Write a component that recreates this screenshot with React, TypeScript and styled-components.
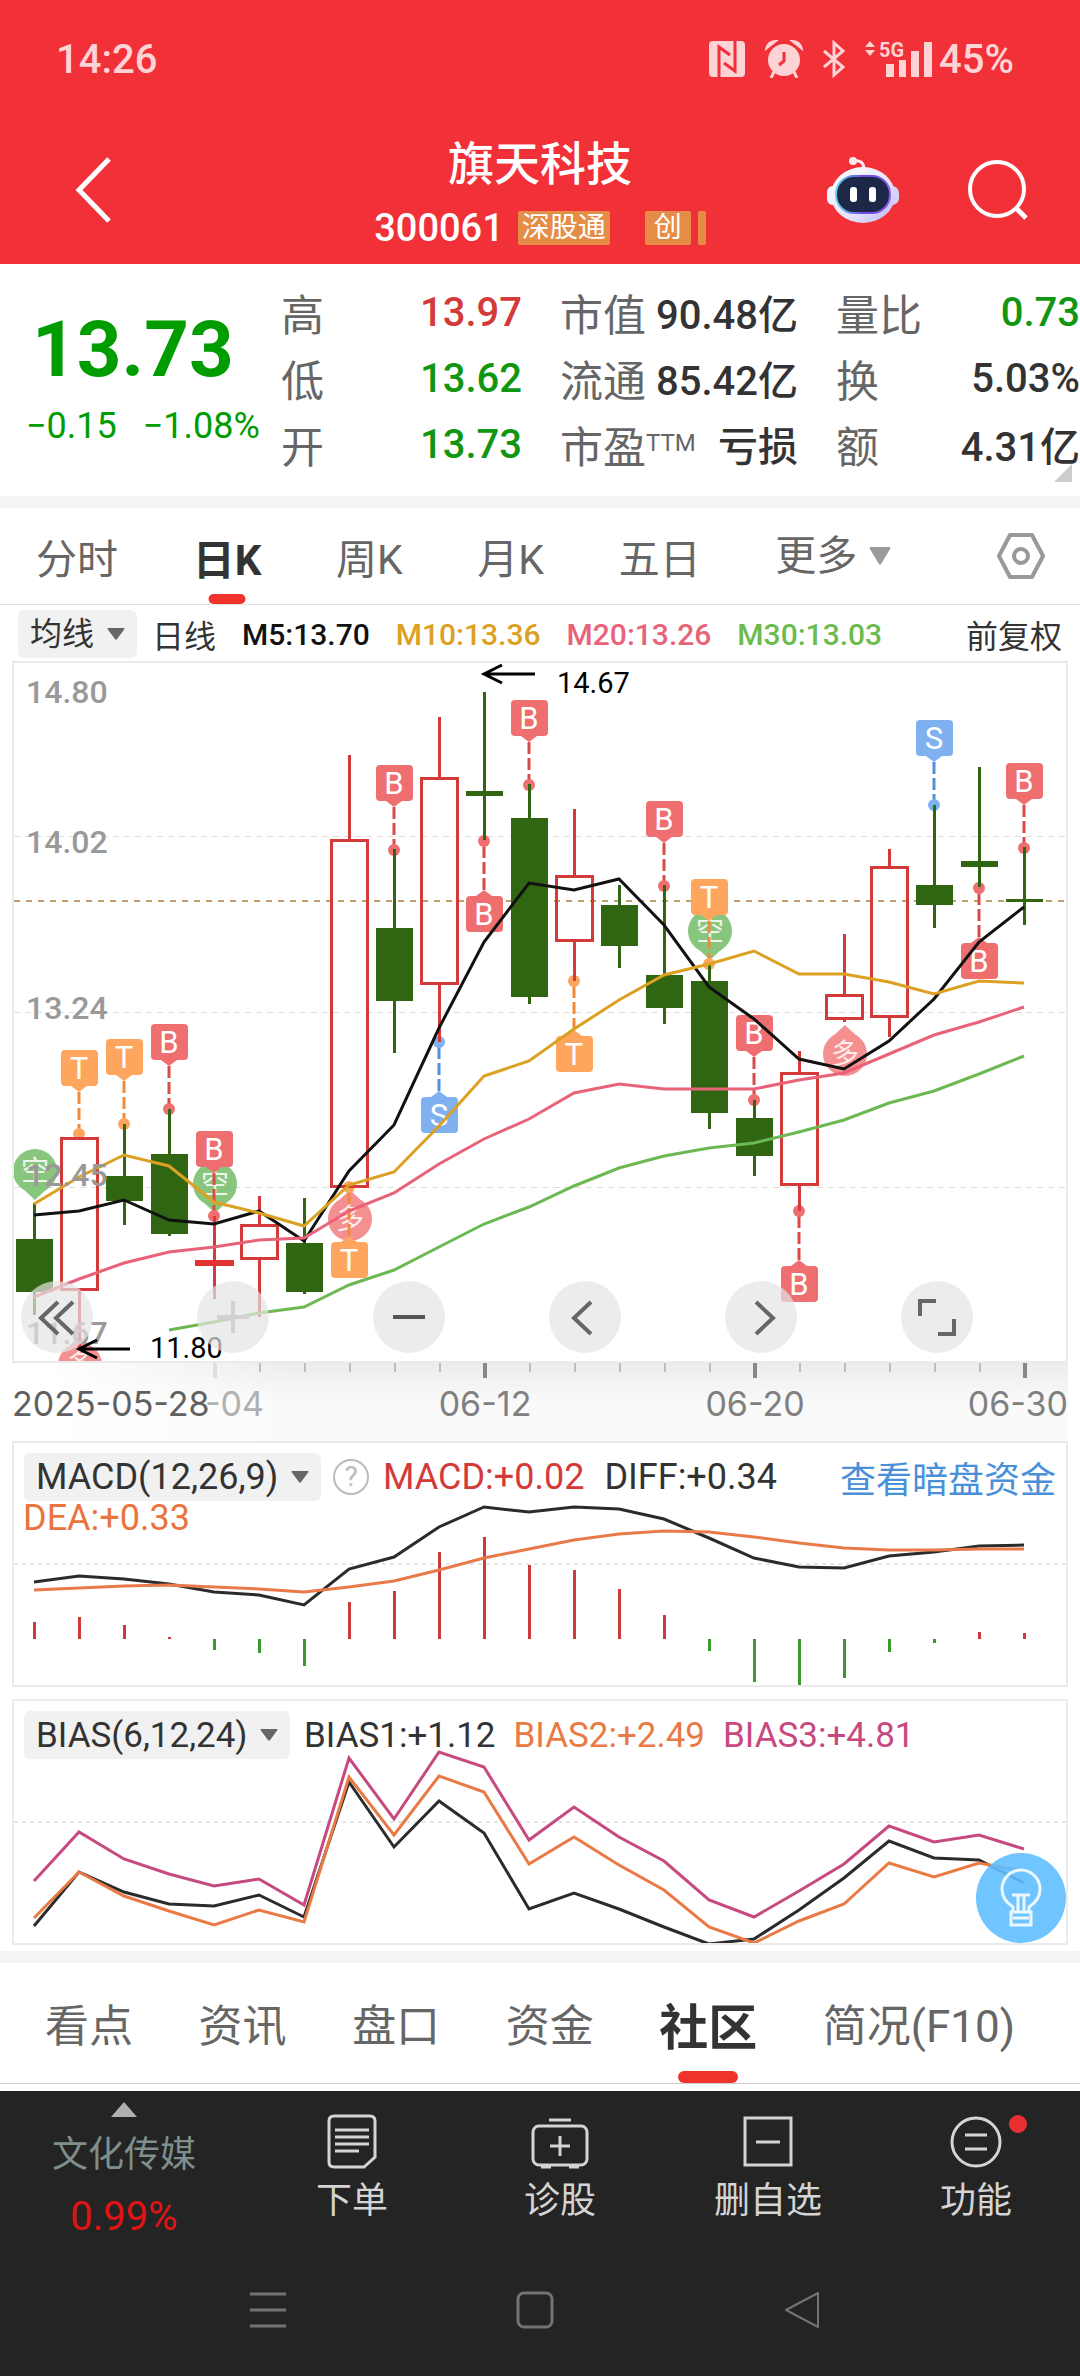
import React from "react";
import styled, { createGlobalStyle } from "styled-components";

const RED = "#f13038";
const UP = "#d43a3a";
const DOWN = "#109610";

const sans = `Roboto, "Noto Sans CJK SC", sans-serif`;

const GlobalStyle = createGlobalStyle`
  *, *::before, *::after { box-sizing: border-box; }
  body { margin: 0; background: #242424; font-family: ${sans}; color: #333; }
  button, select { font: inherit; color: inherit; border: 0; padding: 0; margin: 0; background: none; }
  button { cursor: pointer; }
  svg { display: block; flex: none; }
  h1, p, dl, dt, dd { margin: 0; font-weight: inherit; }
`;

const Page = styled.div`
  display: flex;
  flex-direction: column;
  background: #fff;
  overflow: hidden;
`;

/* ---------- red header ---------- */

const TopArea = styled.header`
  background: ${RED};
  height: 264px;
  color: #fff;
`;

const StatusBar = styled.div`
  display: flex;
  align-items: center;
  justify-content: space-between;
  height: 118px;
  padding: 0 66px 0 56px;
  color: #fdd3d5;
  font-size: 40px;
  font-weight: 500;
`;

const StatusIcons = styled.div`
  display: flex;
  align-items: center;
  gap: 20px;
`;

const Signal = styled.div`
  display: flex;
  align-items: center;
  gap: 6px;
`;

const TitleBar = styled.div`
  display: grid;
  grid-template-columns: 1fr auto 1fr;
  height: 144px;
  padding: 0 51px;
`;

const IconButton = styled.button`
  display: flex;
  justify-content: flex-start;
`;

const GearButton = styled(IconButton)`
  margin-left: 30px;
`;

const HeaderSide = styled.div<{ $end?: boolean }>`
  display: flex;
  align-items: center;
  justify-content: ${(p) => (p.$end ? "flex-end" : "flex-start")};
  padding-left: 22px;
  gap: 68px;
`;

const TitleBlock = styled.div`
  display: flex;
  flex-direction: column;
  align-items: center;
  padding-top: 16px;
`;

const StockName = styled.h1`
  font-size: 46px;
  line-height: 60px;
  font-weight: 500;
`;

const StockMeta = styled.div`
  display: flex;
  align-items: center;
  height: 68px;
  font-size: 38px;
  font-weight: 500;
`;

const Badge = styled.span<{ $gap: number; $pad: number }>`
  height: 34px;
  margin-left: ${(p) => p.$gap}px;
  padding: 0 ${(p) => p.$pad}px;
  border-radius: 2px;
  background: #e58d47;
  font-size: 28px;
  line-height: 33px;
  font-weight: 400;
`;

/* ---------- quote ---------- */

const Quote = styled.section`
  position: relative;
  display: grid;
  grid-template-columns: 265px 241px 276px 1fr;
  height: 244px;
  padding: 15px 0 0 16px;
  border-bottom: 12px solid #f4f4f4;
`;

const PriceBlock = styled.div`
  display: flex;
  flex-direction: column;
  color: #009c00;
`;

const Price = styled.strong`
  padding: 20px 0 0 16px;
  font-size: 78px;
  line-height: 102px;
`;

const Change = styled.p`
  display: flex;
  gap: 26px;
  padding-left: 10px;
  font-size: 36px;
  line-height: 50px;
  white-space: nowrap;
`;

const Fields = styled.dl<{ $indent: number }>`
  padding-left: ${(p) => p.$indent}px;
`;

const Field = styled.div`
  display: flex;
  justify-content: space-between;
  align-items: center;
  height: 66px;
  white-space: nowrap;
  dt { font-size: 43px; color: #666; }
  sup { font-size: 24px; line-height: 0; vertical-align: 12px; }
`;

const Value = styled.dd<{ $color?: string }>`
  font-size: 40px;
  font-weight: 500;
  color: ${(p) => p.$color ?? "#333"};
`;

const Corner = styled.svg`
  position: absolute;
  right: 8px;
  bottom: 14px;
`;

/* ---------- tabs ---------- */

const PeriodTabs = styled.nav`
  display: flex;
  align-items: center;
  justify-content: space-between;
  height: 97px;
  padding: 0 34px 0 36px;
  border-bottom: 1px solid #e2e2e2;
  font-size: 41px;
  color: #666;
`;

const Tab = styled.button<{ $active?: boolean; $size?: number }>`
  position: relative;
  height: 100%;
  white-space: nowrap;
  ${(p) => p.$active && `color: #333; font-weight: 700; font-size: ${p.$size}px;`}
`;

const Underline = styled.span<{ $w: number; $h: number }>`
  position: absolute;
  left: 50%;
  bottom: 0;
  width: ${(p) => p.$w}px;
  height: ${(p) => p.$h}px;
  border-radius: 6px;
  background: #f1332e;
  transform: translateX(-50%);
`;

const Picker = styled.label<{ $filled?: boolean; $size: number; $color: string }>`
  display: flex;
  align-items: center;
  gap: 12px;
  height: 48px;
  padding: ${(p) => (p.$filled ? "0 12px" : "0")};
  border-radius: 6px;
  background: ${(p) => (p.$filled ? "#f1f1f1" : "none")};
  font-size: ${(p) => p.$size}px;
  color: ${(p) => p.$color};
  select { appearance: none; cursor: pointer; }
`;

const MaRow = styled.div`
  display: flex;
  align-items: center;
  gap: 15px;
  height: 56px;
  padding: 2px 18px 0 18px;
  font-size: 32px;
  white-space: nowrap;
`;

const Reading = styled.span<{ $color: string }>`
  color: ${(p) => p.$color};
`;

const MaReading = styled(Reading)`
  font-size: 30px;
  font-weight: 500;
  margin-left: 11px;
`;

const PushRight = styled.button`
  margin-left: auto;
`;

/* ---------- charts ---------- */

const Charts = styled.section`
  padding: 0 12px 6px;
`;

const Panel = styled.div`
  position: relative;
  border: 2px solid #ebebeb;
  margin-bottom: 12px;
  &:last-child { margin-bottom: 0; }
`;

const KPanel = styled(Panel)`
  margin-bottom: 0;
`;

const ChartSvg = styled.svg`
  width: 100%;
  height: auto;
`;

const Axis = styled.div`
  background:
    linear-gradient(to right, #fff 0, #fff 40px, transparent 280px),
    linear-gradient(#ececec, #fafafa 50%, #fafafa);
`;

const Controls = styled.div`
  position: absolute;
  left: 7px;
  right: 93px;
  bottom: 8px;
  display: flex;
  justify-content: space-between;
`;

const RoundButton = styled.button`
  width: 72px;
  height: 72px;
  border-radius: 50%;
  background: rgba(228, 228, 228, 0.7);
`;

const PanelHead = styled.div<{ $size: number }>`
  position: absolute;
  top: 10px;
  left: 10px;
  right: 10px;
  display: flex;
  align-items: center;
  height: 48px;
  font-size: ${(p) => p.$size}px;
  white-space: nowrap;
`;

const Readings = styled.div<{ $gap: number }>`
  display: flex;
  gap: ${(p) => p.$gap}px;
  margin-left: 14px;
`;

const HelpButton = styled.button`
  margin-left: 12px;
  width: 36px;
  height: 36px;
  border: 2px solid #bbb;
  border-radius: 50%;
  color: #bbb;
  font-size: 28px;
  line-height: 32px;
`;

const DarkPoolLink = styled.a`
  margin-left: auto;
  color: #4a90d9;
  text-decoration: none;
`;

const SecondLine = styled.div`
  position: absolute;
  top: 54px;
  left: 9px;
  font-size: 36px;
  line-height: 42px;
`;

const HintButton = styled.button`
  position: absolute;
  right: 0;
  bottom: 0;
  width: 90px;
  height: 90px;
  border-radius: 50%;
  background: rgba(96, 190, 255, 0.9);
  display: flex;
  align-items: center;
  justify-content: center;
`;

/* ---------- bottom ---------- */

const SectionTabs = styled.nav`
  display: flex;
  justify-content: space-between;
  height: 133px;
  padding: 0 65px 0 45px;
  border-top: 12px solid #f4f4f4;
  border-bottom: 1px solid #ccc;
  margin-bottom: 7px;
  font-size: 44px;
  color: #666;
`;

const BottomBar = styled.nav`
  display: grid;
  grid-template-columns: 248px repeat(4, 1fr);
  height: 147px;
  background: #242424;
  color: #d4d4d4;
  font-size: 36px;
`;

const Sector = styled.button`
  display: flex;
  flex-direction: column;
  align-items: center;
  padding-top: 11px;
  color: #7e8f8c;
  line-height: 62px;
  span:last-child { color: #e01414; font-size: 40px; }
  svg { margin-bottom: 7px; }
`;

const Action = styled.button`
  display: flex;
  flex-direction: column;
  align-items: center;
  padding-top: 22px;
  line-height: 64px;
`;

const IconWrap = styled.span`
  position: relative;
`;

const Dot = styled.span`
  position: absolute;
  top: 2px;
  right: -22px;
  width: 18px;
  height: 18px;
  border-radius: 50%;
  background: #e83030;
`;

const SystemNav = styled.div`
  display: flex;
  justify-content: space-between;
  align-items: flex-start;
  height: 138px;
  padding: 50px 256px 0 246px;
  background: #242424;
  color: #737373;
`;

/* ---------- data ---------- */

type Candle = { high: number; low: number; top: number; bottom: number; up?: boolean };

const CANDLES: Candle[] = [
  { high: 543, low: 655, top: 579, bottom: 632 },
  { high: 477, low: 690, top: 477, bottom: 631, up: true },
  { high: 464, low: 565, top: 516, bottom: 541 },
  { high: 449, low: 576, top: 494, bottom: 574 },
  { high: 556, low: 639, top: 600, bottom: 606, up: true },
  { high: 536, low: 657, top: 564, bottom: 600, up: true },
  { high: 538, low: 634, top: 583, bottom: 632 },
  { high: 95, low: 528, top: 179, bottom: 528, up: true },
  { high: 189, low: 393, top: 268, bottom: 341 },
  { high: 57, low: 382, top: 117, bottom: 325, up: true },
  { high: 32, low: 180, top: 131, bottom: 136 },
  { high: 124, low: 344, top: 158, bottom: 337 },
  { high: 149, low: 321, top: 215, bottom: 282, up: true },
  { high: 225, low: 308, top: 245, bottom: 286 },
  { high: 225, low: 364, top: 315, bottom: 348 },
  { high: 303, low: 469, top: 321, bottom: 453 },
  { high: 440, low: 516, top: 458, bottom: 496 },
  { high: 391, low: 551, top: 412, bottom: 526, up: true },
  { high: 274, low: 362, top: 334, bottom: 360, up: true },
  { high: 189, low: 377, top: 206, bottom: 358, up: true },
  { high: 145, low: 268, top: 225, bottom: 245 },
  { high: 107, low: 227, top: 201, bottom: 207 },
  { high: 187, low: 265, top: 239, bottom: 242 },
];

const MA5 = [555, 551, 540, 560, 564, 551, 581, 511, 465, 368, 282, 223, 230, 219, 265, 327, 359, 399, 409, 381, 339, 282, 247];
const MA10 = [544, 517, 495, 506, 542, 553, 566, 525, 512, 466, 416, 401, 369, 340, 315, 304, 291, 314, 314, 322, 334, 321, 323];
const MA20 = [637, 619, 603, 592, 587, 580, 578, 551, 533, 504, 479, 459, 433, 424, 429, 429, 429, 420, 413, 394, 375, 362, 347];
const MA30 = [670, 662, 653, 647, 625, 610, 587, 564, 547, 526, 508, 496, 488, 483, 472, 460, 443, 431, 414, 396];

type Marker = { at: number; letter: "B" | "S" | "T"; dot: number; box: number };

const MARKERS: Marker[] = [
  { at: 1, letter: "T", dot: 474, box: 390 },
  { at: 2, letter: "T", dot: 464, box: 379 },
  { at: 3, letter: "B", dot: 449, box: 364 },
  { at: 4, letter: "B", dot: 556, box: 471 },
  { at: 7, letter: "T", dot: 527, box: 582 },
  { at: 8, letter: "B", dot: 190, box: 105 },
  { at: 9, letter: "S", dot: 382, box: 437 },
  { at: 10, letter: "B", dot: 181, box: 236 },
  { at: 11, letter: "B", dot: 125, box: 40 },
  { at: 12, letter: "T", dot: 321, box: 376 },
  { at: 14, letter: "B", dot: 226, box: 141 },
  { at: 15, letter: "T", dot: 304, box: 219 },
  { at: 16, letter: "B", dot: 440, box: 355 },
  { at: 17, letter: "B", dot: 551, box: 606 },
  { at: 20, letter: "S", dot: 145, box: 60 },
  { at: 21, letter: "B", dot: 228, box: 283 },
  { at: 22, letter: "B", dot: 188, box: 103 },
];

const MARKER_COLORS = { B: "#ef6f70", S: "#7fb1f1", T: "#ffa65e" };
const TAIL_COLORS = { B: "#d94b4b", S: "#4f8fe0", T: "#f08a3c" };

const DROPS = [
  { at: 0, y: 511, label: "空" },
  { at: 1, y: 705, label: "多" },
  { at: 4, y: 524, label: "空" },
  { at: 7, y: 559, label: "多" },
  { at: 15, y: 271, label: "空" },
  { at: 18, y: 394, label: "多" },
];

const DIFF = [141, 135, 138, 143, 151, 154, 164, 128, 116, 86, 66, 71, 66, 68, 78, 97, 117, 126, 127, 115, 111, 105, 104];
const DEA = [149, 147, 145, 144, 146, 148, 151, 146, 140, 129, 117, 108, 99, 93, 90, 91, 96, 102, 107, 109, 109, 108, 108];
const BARS = [181, 176, 184, 196, 209, 212, 225, 161, 150, 111, 96, 124, 129, 148, 174, 210, 241, 245, 237, 211, 202, 191, 192];
const BAR_BASE = 198;

const BIAS1 = [227, 173, 193, 205, 207, 196, 218, 83, 148, 102, 134, 210, 194, 210, 228, 245, 240, 211, 179, 142, 159, 161, 184];
const BIAS2 = [219, 173, 197, 212, 226, 211, 223, 78, 136, 77, 93, 165, 138, 166, 191, 228, 244, 222, 205, 164, 178, 164, 172];
const BIAS3 = [182, 133, 160, 175, 187, 180, 206, 59, 120, 53, 68, 141, 108, 138, 162, 201, 218, 192, 165, 127, 143, 136, 150];

const STEP = 45;
const colX = (i: number) => 22 + i * STEP;

/* ---------- chart parts ---------- */

function Line({ data, color, from = 0 }: { data: number[]; color: string; from?: number }) {
  return (
    <polyline
      points={data.map((y, i) => `${colX(i + from)},${y}`).join(" ")}
      fill="none"
      stroke={color}
      strokeWidth={3}
    />
  );
}

function CandleMark({ at, c }: { at: number; c: Candle }) {
  const x = colX(at);
  if (!c.up) {
    return (
      <g fill="#306512">
        <rect x={x - 1} y={c.high} width={3} height={c.low - c.high} />
        <rect x={x - 18} y={c.top} width={37} height={c.bottom - c.top} />
      </g>
    );
  }
  const flat = c.bottom - c.top < 10;
  return (
    <g fill={UP}>
      <rect x={x - 1} y={c.high} width={3} height={c.top - c.high} />
      <rect x={x - 1} y={c.bottom} width={3} height={c.low - c.bottom} />
      {flat ? (
        <rect x={x - 19} y={c.top} width={39} height={c.bottom - c.top} fill="#e23333" />
      ) : (
        <rect x={x - 17.5} y={c.top + 1.5} width={36} height={c.bottom - c.top - 3} fill="none" stroke={UP} strokeWidth={3} />
      )}
    </g>
  );
}

function MarkerMark({ m }: { m: Marker }) {
  const x = colX(m.at);
  const above = m.box < m.dot;
  const edge = above ? m.box + 36 : m.box;
  const tip = above ? edge + 6 : edge - 6;
  return (
    <g>
      <line x1={x} x2={x} y1={tip} y2={m.dot} stroke={TAIL_COLORS[m.letter]} strokeWidth={3} strokeDasharray="12 4" />
      <circle cx={x} cy={m.dot} r={6} fill={MARKER_COLORS[m.letter]} />
      <rect x={x - 18} y={m.box} width={37} height={36} rx={4} fill={MARKER_COLORS[m.letter]} />
      <path d={`M${x - 8} ${edge} L${x} ${tip} L${x + 8} ${edge} Z`} fill={MARKER_COLORS[m.letter]} />
      <text x={x} y={m.box + 29} fontSize={31} textAnchor="middle" fill="#fff">
        {m.letter}
      </text>
    </g>
  );
}

function DropMark({ at, y, label }: { at: number; y: number; label: string }) {
  const x = colX(at) + 1;
  const down = label === "空";
  const s = down ? 1 : -1;
  const fill = down ? "#7dc070" : "#f58585";
  return (
    <g opacity={0.9}>
      <circle cx={x} cy={y} r={22} fill={fill} />
      <path d={`M${x - 14} ${y + 16 * s} L${x} ${y + 29 * s} L${x + 14} ${y + 16 * s} Z`} fill={fill} />
      <text x={x} y={y + 10} fontSize={28} textAnchor="middle" fill="#fff" opacity={0.85}>
        {label}
      </text>
    </g>
  );
}

function Arrow({ x, y, length }: { x: number; y: number; length: number }) {
  return <path d={`M${x + length} ${y} H${x} M${x + 18} ${y - 9} L${x} ${y} L${x + 18} ${y + 9}`} stroke="#000" strokeWidth={3} fill="none" />;
}

function KChart() {
  return (
    <ChartSvg viewBox="2 3 1052 698" role="img" aria-label="日K线图">
      <path d="M2 176.5 H1054 M2 352.5 H1054 M2 527.5 H1054" stroke="#dcdcdc" strokeWidth={1} strokeDasharray="6 5" />
      <path d="M2 241 H1054" stroke="#c0a070" strokeWidth={2} strokeDasharray="6 6" />
      {DROPS.map((d) => (
        <DropMark key={d.at} {...d} />
      ))}
      {MARKERS.map((m) => (
        <MarkerMark key={m.at} m={m} />
      ))}
      {CANDLES.map((c, i) => (
        <CandleMark key={i} at={i} c={c} />
      ))}
      <Line data={MA5} color="#111" />
      <Line data={MA10} color="#dca022" />
      <Line data={MA20} color="#e8637a" />
      <Line data={MA30} from={3} color="#6cb853" />
      <g fontSize={32} fontWeight={500} fill="#999">
        <text x={14} y={43}>14.80</text>
        <text x={14} y={193}>14.02</text>
        <text x={14} y={359}>13.24</text>
        <text x={14} y={526}>12.45</text>
        <text x={14} y={684}>11.67</text>
      </g>
      <Arrow x={472} y={14} length={51} />
      <Arrow x={67} y={689} length={51} />
      <g fontSize={29} fill="#000">
        <text x={545} y={33}>14.67</text>
        <text x={138} y={698}>11.80</text>
      </g>
    </ChartSvg>
  );
}

function DateAxis() {
  return (
    <Axis>
      <ChartSvg viewBox="0 0 1056 78" role="img" aria-label="日期">
        {CANDLES.map((_, i) => {
          if (i < 4) return null;
          const major = i % 6 === 4;
          return (
            <rect
              key={i}
              x={colX(i) - (major ? 1 : 0)}
              y={0}
              width={major ? 4 : 2}
              height={major ? 15 : 9}
              fill={i === 4 ? "#dedede" : major ? "#888" : "#bdbdbd"}
            />
          );
        })}
        <g fontFamily="Inter, sans-serif" fontSize={34} fill="#808080">
          <text x={0} y={53} fill="#606060">2025-05-28</text>
          <text x={252} y={53} textAnchor="end" fill="#b0b0b0">-04</text>
          <text x={473} y={53} textAnchor="middle">06-12</text>
          <text x={743} y={53} textAnchor="middle">06-20</text>
          <text x={1056} y={53} textAnchor="end">06-30</text>
        </g>
      </ChartSvg>
    </Axis>
  );
}

function MacdChart() {
  return (
    <ChartSvg viewBox="2 2 1052 242" role="img" aria-label="MACD">
      <path d="M2 123 H1054" stroke="#e6e6e6" strokeWidth={2} strokeDasharray="4 4" />
      {BARS.map((y, i) => (
        <rect
          key={i}
          x={colX(i) - 1}
          y={Math.min(y, BAR_BASE)}
          width={3}
          height={Math.abs(y - BAR_BASE)}
          fill={y < BAR_BASE ? "#cc3a3a" : "#3a9a2e"}
        />
      ))}
      <Line data={DIFF} color="#2b2b2b" />
      <Line data={DEA} color="#e87a4a" />
    </ChartSvg>
  );
}

function BiasChart() {
  return (
    <ChartSvg viewBox="2 2 1052 242" role="img" aria-label="BIAS">
      <path d="M2 123 H1054" stroke="#e6e6e6" strokeWidth={2} strokeDasharray="4 4" />
      <Line data={BIAS1} color="#2b2b2b" />
      <Line data={BIAS2} color="#ea7a45" />
      <Line data={BIAS3} color="#c64a80" />
    </ChartSvg>
  );
}

/* ---------- icons ---------- */

const NfcIcon = () => (
  <svg width="36" height="36" viewBox="0 0 36 36">
    <rect width="36" height="36" rx="4" fill="#fdd3d5" />
    <path d="M10 36 V6 L21 14 M26 0 V30 L15 22" stroke={RED} strokeWidth="3" fill="none" />
  </svg>
);

const AlarmIcon = () => (
  <svg width="38" height="38" viewBox="0 0 38 38" fill="#fdd3d5">
    <circle cx="19" cy="20" r="16" />
    <path d="M1 9 Q3 1 11 1 Z M37 9 Q35 1 27 1 Z" stroke="#fdd3d5" strokeWidth="2" />
    <path d="M9 32 L6 38 M29 32 L32 38" stroke="#fdd3d5" strokeWidth="3" />
    <path d="M19 12 V21 L14 25" stroke={RED} strokeWidth="3" fill="none" />
  </svg>
);

const BluetoothIcon = () => (
  <svg width="22" height="38" viewBox="0 0 22 38" fill="none" stroke="#fdd3d5" strokeWidth="3">
    <path d="M1 11 L20 27 L11 35 V3 L20 11 L1 27" />
  </svg>
);

const SignalIcon = () => (
  <svg width="68" height="38" viewBox="0 0 68 38" fill="#fdd3d5">
    <path d="M0 7 L5 1 L10 7 Z M0 10 L5 16 L10 10 Z" />
    <text x="14" y="17" fontSize="20" fontWeight="700">5G</text>
    <path d="M21 24 h8 v13 h-8 z M34 20 h7 v17 h-7 z M46 11 h8 v26 h-8 z M59 2 h8 v35 h-8 z" />
  </svg>
);

const BackIcon = () => (
  <svg width="40" height="68" viewBox="0 0 40 68" fill="none" stroke="#fff" strokeWidth="5">
    <path d="M36 3 L6 34 L36 65" />
  </svg>
);

const RobotIcon = () => (
  <svg width="72" height="68" viewBox="0 0 72 68">
    <defs>
      <linearGradient id="shell" x1="0" y1="0" x2="1" y2="1">
        <stop offset="0" stopColor="#ffffff" />
        <stop offset="0.6" stopColor="#e6e4fa" />
        <stop offset="1" stopColor="#b9b4f0" />
      </linearGradient>
      <linearGradient id="rim" x1="0" y1="0" x2="1" y2="0">
        <stop offset="0" stopColor="#66d4e8" />
        <stop offset="0.5" stopColor="#6a4be0" />
        <stop offset="1" stopColor="#8a5af0" />
      </linearGradient>
    </defs>
    <path d="M26 5 Q37 3 37 14" stroke="#fde8ee" strokeWidth="3" fill="none" />
    <circle cx="26" cy="5" r="4" fill="#fde8ee" />
    <rect x="0" y="30" width="72" height="19" rx="7" fill="#d5d2f7" />
    <rect x="0" y="30" width="14" height="19" rx="6" fill="#f3f2ff" />
    <ellipse cx="36" cy="39" rx="32" ry="28" fill="url(#shell)" />
    <rect x="9" y="20" width="54" height="37" rx="18" fill="#1d2747" stroke="url(#rim)" strokeWidth="2" />
    <rect x="23" y="31" width="7" height="15" rx="3" fill="#fff" />
    <rect x="42" y="31" width="7" height="15" rx="3" fill="#fff" />
  </svg>
);

const SearchIcon = () => (
  <svg width="62" height="62" viewBox="0 0 62 62" fill="none" stroke="#fff" strokeWidth="4">
    <circle cx="30" cy="30" r="27" />
    <path d="M48 48 L59 59" strokeWidth="5" />
  </svg>
);

const GearIcon = () => (
  <svg width="50" height="48" viewBox="0 0 50 48" fill="none" stroke="#999" strokeWidth="4">
    <path d="M14 3 H36 L47 24 L36 45 H14 L3 24 Z" strokeLinejoin="round" />
    <circle cx="25" cy="24" r="7" />
  </svg>
);

const Caret = ({ w, h, color }: { w: number; h: number; color: string }) => (
  <svg width={w} height={h} viewBox="0 0 20 16" preserveAspectRatio="none" fill={color}>
    <path d="M1 0 H19 Q20 1 19 2 L11 15 Q10 16 9 15 L1 2 Q0 1 1 0 Z" />
  </svg>
);

const controlPaths = [
  { label: "最早", d: "M37 21 L20 37 L37 53 M52 21 L35 37 L52 53", color: "#666" },
  { label: "放大", d: "M20 36 H52 M36 20 V52", color: "#d2d2d2" },
  { label: "缩小", d: "M20 36 H52", color: "#555" },
  { label: "左移", d: "M42 21 L25 37 L42 53", color: "#666" },
  { label: "右移", d: "M31 21 L48 37 L31 53", color: "#666" },
  { label: "全屏", d: "M19 35 V20 H35 M53 38 V53 H37", color: "#666" },
];

const BulbIcon = () => (
  <svg width="42" height="60" viewBox="0 0 42 60" fill="none" stroke="#e9f9ff" strokeWidth="3">
    <path d="M13 44 V39 Q2 32 2 21 A19 19 0 0 1 40 21 Q40 32 29 39 V44" />
    <path d="M12 27 H30 M18 27 V44 M24 27 V44 M11 44 H31 V57 H11 Z M13 50 H29" />
  </svg>
);

const stroke = { fill: "none", stroke: "#d4d4d4", strokeWidth: 3 };

const OrderIcon = () => (
  <svg width="58" height="56" viewBox="0 0 58 56" {...stroke}>
    <path d="M11 3 H47 Q52 3 52 8 V44 L41 54 H11 Q6 54 6 49 V8 Q6 3 11 3 Z" />
    <path d="M12 17 H46 M12 24 H46 M12 31 H46 M12 38 H36" />
  </svg>
);

const DiagnoseIcon = () => (
  <svg width="58" height="56" viewBox="0 0 58 56" {...stroke}>
    <path d="M18 7 H40" />
    <rect x="2" y="13" width="54" height="39" rx="6" />
    <path d="M19 33 H39 M29 23 V43" />
    <path d="M10 54 H20 M38 54 H48" />
  </svg>
);

const RemoveIcon = () => (
  <svg width="58" height="56" viewBox="0 0 58 56" {...stroke}>
    <rect x="6" y="5" width="46" height="47" />
    <path d="M17 29 H41" />
  </svg>
);

const FunctionIcon = () => (
  <svg width="58" height="56" viewBox="0 0 58 56" {...stroke}>
    <circle cx="29" cy="29" r="24" />
    <path d="M18 22 H40 M18 36 H40" />
  </svg>
);

/* ---------- page ---------- */

export default function App() {
  return (
    <Page>
      <GlobalStyle />
      <TopArea>
        <StatusBar>
          <span>14:26</span>
          <StatusIcons>
            <NfcIcon />
            <AlarmIcon />
            <BluetoothIcon />
            <Signal>
              <SignalIcon />
              45%
            </Signal>
          </StatusIcons>
        </StatusBar>
        <TitleBar>
          <HeaderSide>
            <IconButton aria-label="返回"><BackIcon /></IconButton>
          </HeaderSide>
          <TitleBlock>
            <StockName>旗天科技</StockName>
            <StockMeta>
              300061
              <Badge $gap={14} $pad={4}>深股通</Badge>
              <Badge $gap={35} $pad={9}>创</Badge>
              <Badge $gap={7} $pad={4} />
            </StockMeta>
          </TitleBlock>
          <HeaderSide $end>
            <IconButton aria-label="助手"><RobotIcon /></IconButton>
            <IconButton aria-label="搜索"><SearchIcon /></IconButton>
          </HeaderSide>
        </TitleBar>
      </TopArea>

      <Quote>
        <PriceBlock>
          <Price>13.73</Price>
          <Change>
            <span>−0.15</span>
            <span>−1.08%</span>
          </Change>
        </PriceBlock>
        <Fields $indent={0}>
          <Field><dt>高</dt><Value $color={UP}>13.97</Value></Field>
          <Field><dt>低</dt><Value $color={DOWN}>13.62</Value></Field>
          <Field><dt>开</dt><Value $color={DOWN}>13.73</Value></Field>
        </Fields>
        <Fields $indent={38}>
          <Field><dt>市值</dt><Value>90.48亿</Value></Field>
          <Field><dt>流通</dt><Value>85.42亿</Value></Field>
          <Field><dt>市盈<sup>TTM</sup></dt><Value>亏损</Value></Field>
        </Fields>
        <Fields $indent={38}>
          <Field><dt>量比</dt><Value $color={DOWN}>0.73</Value></Field>
          <Field><dt>换</dt><Value>5.03%</Value></Field>
          <Field><dt>额</dt><Value>4.31亿</Value></Field>
        </Fields>
        <Corner width="18" height="18" viewBox="0 0 18 18"><path d="M18 0 V18 H0 Z" fill="#ccc" /></Corner>
      </Quote>

      <PeriodTabs>
        <Tab>分时</Tab>
        <Tab $active $size={42}>日K<Underline $w={37} $h={10} /></Tab>
        <Tab>周K</Tab>
        <Tab>月K</Tab>
        <Tab>五日</Tab>
        <Picker $size={41} $color="#666">
          <select aria-label="更多周期"><option>更多</option></select>
          <Caret w={22} h={18} color="#999" />
        </Picker>
        <GearButton aria-label="设置"><GearIcon /></GearButton>
      </PeriodTabs>

      <MaRow>
        <Picker $filled $size={32} $color="#333">
          <select aria-label="主图指标"><option>均线</option></select>
          <Caret w={18} h={12} color="#666" />
        </Picker>
        <span>日线</span>
        <MaReading $color="#111">M5:13.70</MaReading>
        <MaReading $color="#dca022">M10:13.36</MaReading>
        <MaReading $color="#e8637a">M20:13.26</MaReading>
        <MaReading $color="#6cbb4f">M30:13.03</MaReading>
        <PushRight>前复权</PushRight>
      </MaRow>

      <Charts>
        <KPanel>
          <KChart />
          <Controls>
            {controlPaths.map((c) => (
              <RoundButton key={c.label} aria-label={c.label}>
                <svg width="72" height="72" viewBox="0 0 72 72">
                  <path d={c.d} fill="none" stroke={c.color} strokeWidth="4" />
                </svg>
              </RoundButton>
            ))}
          </Controls>
        </KPanel>
        <DateAxis />
        <Panel>
          <MacdChart />
          <PanelHead $size={36}>
            <Picker $filled $size={36} $color="#333">
              <select aria-label="副图指标一"><option>MACD(12,26,9)</option></select>
              <Caret w={18} h={12} color="#666" />
            </Picker>
            <HelpButton aria-label="指标说明">?</HelpButton>
            <Readings $gap={20}>
              <Reading $color={UP}>MACD:+0.02</Reading>
              <Reading $color="#333">DIFF:+0.34</Reading>
            </Readings>
            <DarkPoolLink href="#funds">查看暗盘资金</DarkPoolLink>
          </PanelHead>
          <SecondLine>
            <Reading $color="#ea7440">DEA:+0.33</Reading>
          </SecondLine>
        </Panel>
        <Panel>
          <BiasChart />
          <PanelHead $size={35}>
            <Picker $filled $size={35} $color="#333">
              <select aria-label="副图指标二"><option>BIAS(6,12,24)</option></select>
              <Caret w={18} h={12} color="#666" />
            </Picker>
            <Readings $gap={18}>
              <Reading $color="#333">BIAS1:+1.12</Reading>
              <Reading $color="#ea7a45">BIAS2:+2.49</Reading>
              <Reading $color="#c64a80">BIAS3:+4.81</Reading>
            </Readings>
          </PanelHead>
          <HintButton aria-label="提示"><BulbIcon /></HintButton>
        </Panel>
      </Charts>

      <SectionTabs>
        <Tab>看点</Tab>
        <Tab>资讯</Tab>
        <Tab>盘口</Tab>
        <Tab>资金</Tab>
        <Tab $active $size={49}>社区<Underline $w={60} $h={12} /></Tab>
        <Tab>简况(F10)</Tab>
      </SectionTabs>

      <BottomBar>
        <Sector>
          <svg width="26" height="15" viewBox="0 0 26 15"><path d="M13 0 L26 15 H0 Z" fill="#b0b0b0" /></svg>
          <span>文化传媒</span>
          <span>0.99%</span>
        </Sector>
        <Action><OrderIcon />下单</Action>
        <Action><DiagnoseIcon />诊股</Action>
        <Action><RemoveIcon />删自选</Action>
        <Action>
          <IconWrap><FunctionIcon /><Dot /></IconWrap>
          功能
        </Action>
      </BottomBar>

      <SystemNav>
        <button aria-label="最近任务">
          <svg width="44" height="44" viewBox="0 0 44 44" stroke="currentColor" strokeWidth="3"><path d="M4 6 H40 M4 22 H40 M4 38 H40" /></svg>
        </button>
        <button aria-label="主屏幕">
          <svg width="44" height="44" viewBox="0 0 44 44" fill="none" stroke="currentColor" strokeWidth="3"><rect x="5" y="5" width="34" height="34" rx="6" /></svg>
        </button>
        <button aria-label="后退">
          <svg width="44" height="44" viewBox="0 0 44 44" fill="none" stroke="currentColor" strokeWidth="2" strokeLinejoin="round"><path d="M38 5 V39 L6 22 Z" /></svg>
        </button>
      </SystemNav>
    </Page>
  );
}
